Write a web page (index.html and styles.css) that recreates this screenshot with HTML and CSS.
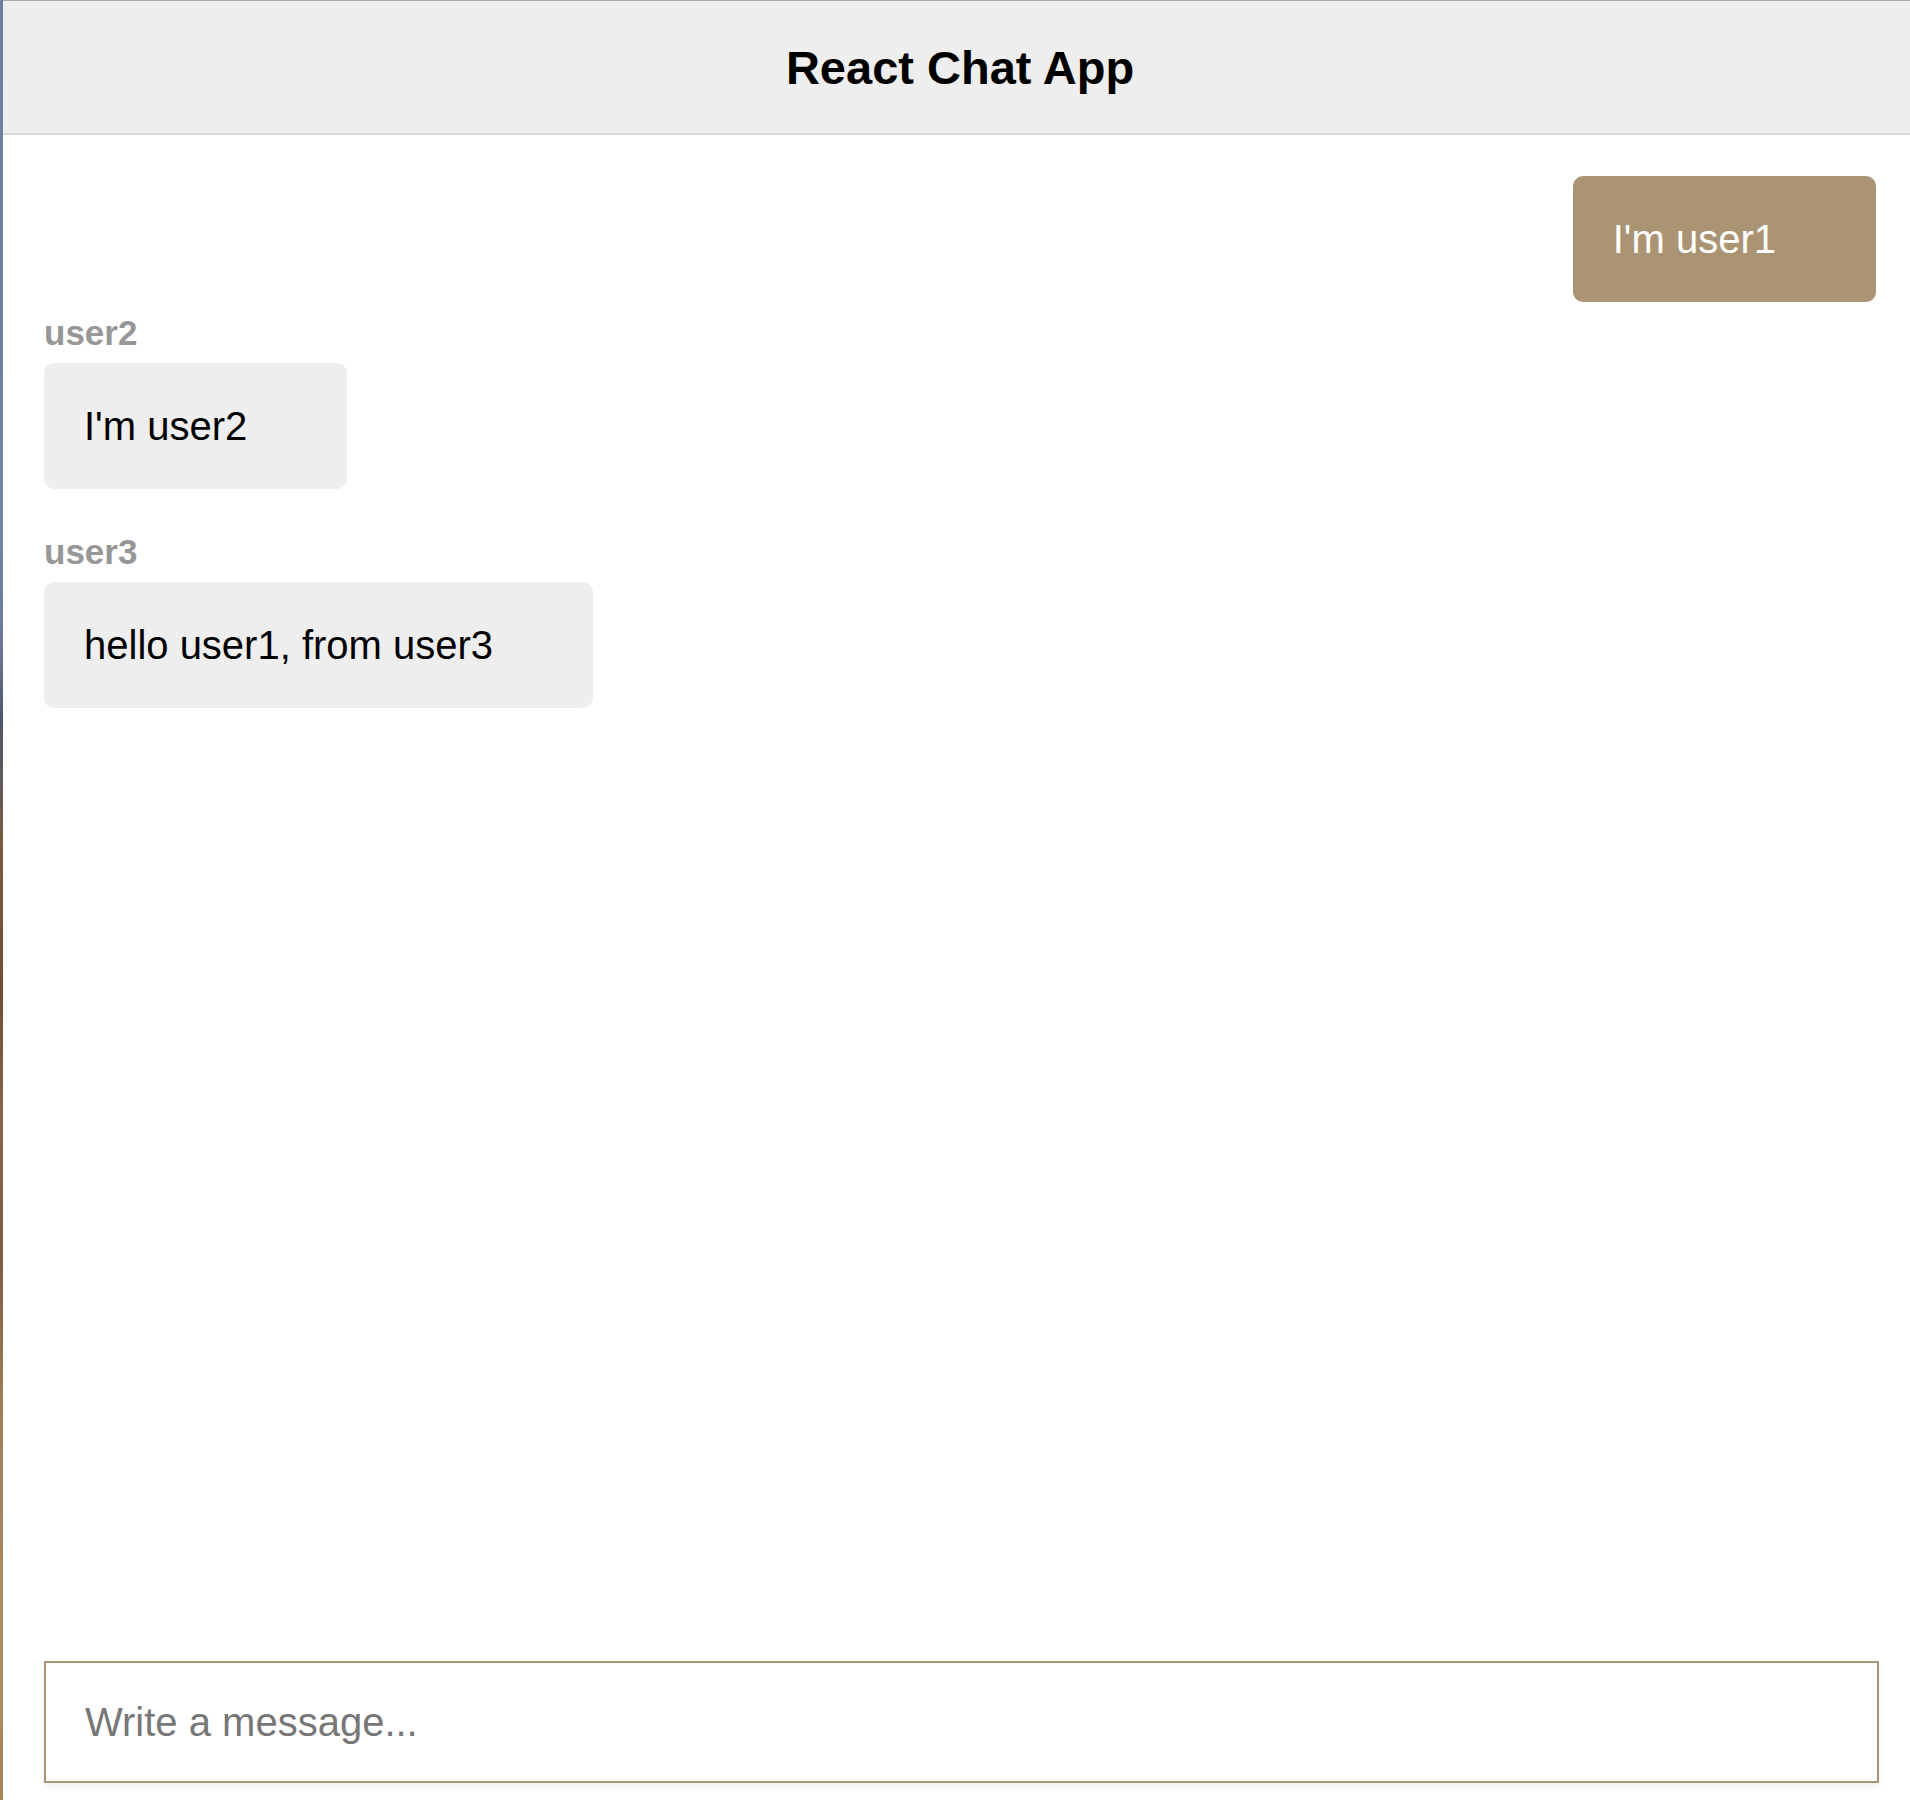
FILE: index.html
```html
<!DOCTYPE html>
<html lang="en">
<head>
<meta charset="utf-8">
<title>React Chat App</title>
<link rel="stylesheet" href="styles.css">
</head>
<body>
<div class="desktop">
  <div class="wallpaper-edge"></div>
  <div class="window">
    <header class="app-header">
      <h1 class="app-title">React Chat App</h1>
    </header>
    <main class="messages">
      <div class="message message-self">
        <div class="bubble bubble-self">I'm user1</div>
      </div>
      <div class="message message-other">
        <div class="username">user2</div>
        <div class="bubble">I'm user2</div>
      </div>
      <div class="message message-other">
        <div class="username">user3</div>
        <div class="bubble">hello user1, from user3</div>
      </div>
    </main>
    <form class="composer">
      <input class="composer-input" type="text" placeholder="Write a message...">
    </form>
  </div>
</div>
</body>
</html>
```
FILE: styles.css
```css
html, body {
  margin: 0;
  padding: 0;
  background: #ffffff;
}

body {
  font-family: "Liberation Sans", Arial, Helvetica, sans-serif;
}

.desktop {
  display: flex;
  height: 1800px;
  overflow: hidden;
}

.wallpaper-edge {
  width: 3px;
  flex: 0 0 3px;
  background: linear-gradient(
    to bottom,
    #6d7d9b 0%,
    #7384a2 30%,
    #6a7896 36%,
    #4f5468 40%,
    #5d5a5e 43%,
    #7a5b3e 47%,
    #6d4f36 55%,
    #85654a 62%,
    #7d5e42 70%,
    #a17e55 78%,
    #b08a5c 90%,
    #a98556 100%
  );
}

.window {
  flex: 1;
  display: flex;
  flex-direction: column;
  border-top: 1px solid #a9a9a9;
  min-width: 0;
}

.app-header {
  height: 132px;
  background: #eeeeee;
  border-bottom: 2px solid #dcdcdc;
  display: flex;
  align-items: center;
  justify-content: center;
  padding-left: 7px;
}

.app-title {
  margin: 0;
  font-size: 47px;
  font-weight: bold;
  color: #000000;
}

.messages {
  flex: 1;
  display: flex;
  flex-direction: column;
  padding: 41px 34px 0 41px;
}

.message {
  display: flex;
  flex-direction: column;
}

.message-self {
  align-items: flex-end;
  margin-bottom: 14px;
}

.message-other {
  align-items: flex-start;
  margin-bottom: 46px;
}

.username {
  font-size: 35px;
  font-weight: bold;
  color: #979797;
  line-height: 34px;
  margin-bottom: 13px;
}

.bubble {
  background: #eeeeee;
  color: #000000;
  font-size: 40px;
  line-height: 46px;
  padding: 40px 100px 40px 40px;
  border-radius: 10px;
}

.bubble-self {
  background: #ab9473;
  color: #ffffff;
}

.composer {
  margin: 0;
  padding: 0 31px 17px 41px;
}

.composer-input {
  display: block;
  width: 100%;
  box-sizing: border-box;
  height: 122px;
  margin: 0;
  border: 2px solid #ab9473;
  border-radius: 0;
  padding: 0 39px;
  font-family: "Liberation Sans", Arial, Helvetica, sans-serif;
  font-size: 40px;
  color: #000000;
  background: #ffffff;
  outline: none;
  box-shadow: 0 4px 6px rgba(0, 0, 0, 0.06);
}

.composer-input::placeholder {
  color: #777777;
}
```
